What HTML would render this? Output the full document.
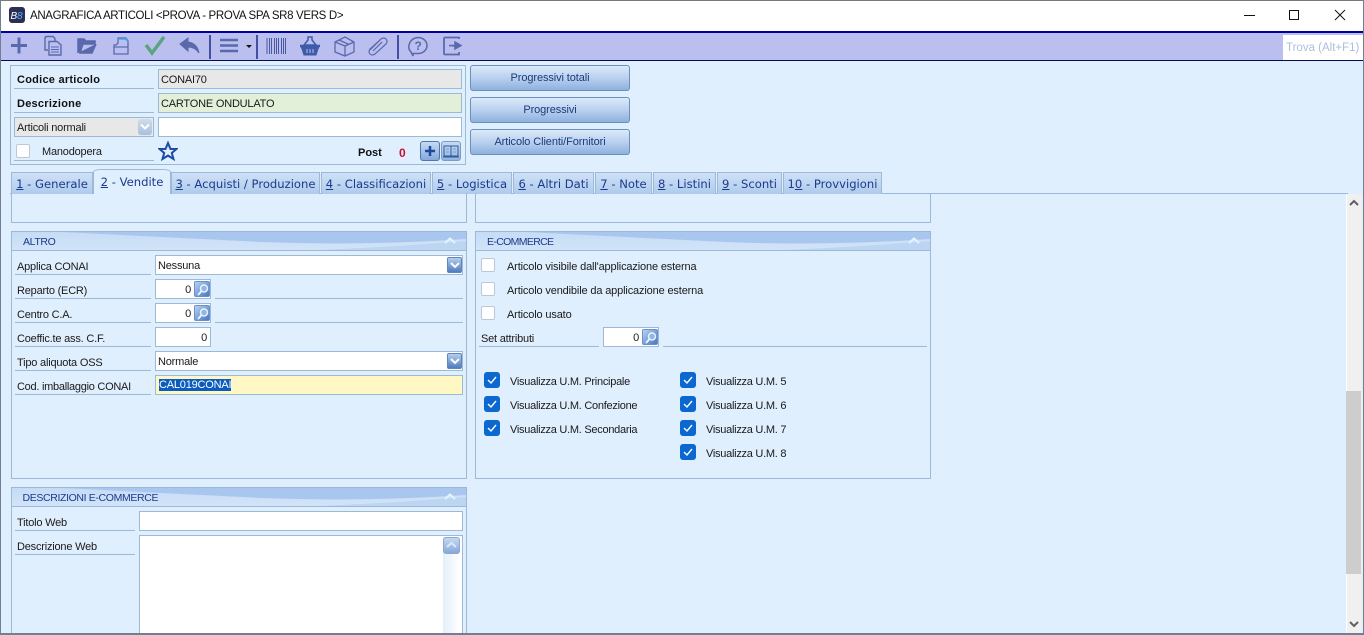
<!DOCTYPE html>
<html lang="it">
<head>
<meta charset="utf-8">
<title>Anagrafica Articoli</title>
<style>
html,body{margin:0;padding:0;width:1364px;height:635px;overflow:hidden;background:#e0effe}
body{position:relative;font-family:"Liberation Sans",sans-serif;font-size:11px;color:#1a1a1a}
.a,.t,.i,.l,.p,.h,.b,.tab,.cb,.cc,.s,.dd{position:absolute;box-sizing:border-box}
.t{white-space:nowrap;line-height:14px;height:14px;letter-spacing:-.2px}
.i{background:#fff;border:1px solid #9cbad8;line-height:21px;padding-left:2px;white-space:nowrap;font-size:11px;letter-spacing:-.2px}
.l{height:1px;background:#9cbad8}
.p{border:1px solid #9cbad8}
.h{height:19px;border-bottom:1px solid #9cbad8;overflow:hidden;color:#1c3a8c;line-height:21px;padding-left:11px;font-size:10.5px;letter-spacing:-.36px}
.h svg{position:absolute;left:0;top:0}
.h span{position:relative}
.b{left:470px;width:160px;height:26px;border:1px solid #6a90bd;border-radius:3px;background:linear-gradient(#dce9f9,#b9d0ef 50%,#8fb0de);text-align:center;line-height:25px;color:#1c3a7c;letter-spacing:-.1px}
.tab{top:172px;height:22px;background:linear-gradient(#cfe1f7,#aecbec);border:1px solid #9cbad8;border-bottom:0;color:#1c3a8c;font-family:"DejaVu Sans",sans-serif;font-size:11.6px;line-height:22px;text-align:center;white-space:nowrap}
.tab u{text-underline-offset:1px}
.cb{width:14px;height:14px;background:#fff;border:1px solid #bcc8d4;border-radius:2px}
.cc{width:16px;height:16px;background:#0a68d0;border-radius:3px}
.cc svg{position:absolute;left:0;top:0}
.s{width:16px;height:16px;border:1px solid #6a90c4;border-radius:2px;background:linear-gradient(135deg,#bcd4f2,#6f9ad8 60%,#4a78c0)}
.s svg{position:absolute;left:1px;top:1px}
.dd{width:15px;height:16px;border-radius:2px;border:1px solid #5f86bb;background:linear-gradient(#b4ccee,#4f7cbe)}
.dd svg{position:absolute;left:1px;top:2px}
.v{letter-spacing:-.27px}
.w{letter-spacing:-.15px}
.bd{font-weight:bold;color:#111;letter-spacing:.25px}
</style>
</head>
<body>
<!-- window frame -->
<div class="a" style="left:0;top:0;width:1364px;height:31px;background:#fff;border-top:1px solid #7a7a7a"></div>
<svg class="a" style="left:9px;top:7px" width="16" height="16"><rect width="16" height="16" rx="3" fill="#2b2f55"/><text x="1.5" y="12" font-family="Liberation Sans" font-size="10" font-style="italic" fill="#fff">B</text><text x="8" y="12" font-family="Liberation Sans" font-size="10" font-style="italic" fill="#5db3f0">8</text></svg>
<div class="t" style="left:30px;top:8px;font-size:11.5px;color:#111;letter-spacing:-.34px;line-height:16px;height:16px">ANAGRAFICA ARTICOLI &lt;PROVA - PROVA SPA SR8 VERS D&gt;</div>
<svg class="a" style="left:1240px;top:6px" width="124" height="20" fill="none" stroke="#111"><path d="M4 9.5H15"/><rect x="49.5" y="4.5" width="9" height="9"/><path d="M95 4L105 14M105 4L95 14"/></svg>

<!-- toolbar -->
<div class="a" style="left:0;top:31px;width:1364px;height:2px;background:#00009c"></div>
<div class="a" style="left:0;top:33px;width:1364px;height:27px;background:#bbbff0"></div>
<div class="a" style="left:0;top:60px;width:1364px;height:1px;background:#0a0a50"></div>
<svg class="a" style="left:0;top:33px" width="480" height="27" fill="none" stroke="#5a69ab">
 <path d="M11 12.500H27M19 4.500V20.500" stroke-width="3"/>
 <path d="M48 17H45V5Q45 3.500 47 3.500H53L55 5.500V8M49 8.500H57L61 12V22H49Z" stroke-width="1.400"/><path d="M51 14H59M51 16.500H59M51 19H59" stroke-width="1"/>
 <path d="M78 20V6H84L86 8H95V11H83L80 20H92L96 11" fill="#5a69ab" stroke-width="1.500"/>
 <path d="M114 21V12H116L118 10V5H126L128 8V12V21Z" stroke="#5a69ab" stroke-width="1.300"/><path d="M117 6H126L128 9" stroke="#4ea2e0" stroke-width="1.500"/><path d="M114 14H128" stroke-width="1.200"/>
 <path d="M146 12L152 20L164 4" stroke="#57a581" stroke-width="3.500"/>
 <path d="M180 11L188 5V9Q197 10 199 20Q195 14 188 14V18Z" fill="#5a69ab" stroke-width="1"/>
 <path d="M210 2V26M257 2V26M398 2V26" stroke="#1c2a8a" stroke-width="1.500"/>
 <path d="M220 7H238M220 12.500H238M220 18H238" stroke-width="2.500"/>
 <path d="M246 12H252L249 15Z" fill="#111" stroke="none"/>
 <path d="M267 5V21M269.500 5V21M271.500 5V21M274.500 5V21M276.500 5V21M278.500 5V21M281.500 5V21M283.500 5V21M285.500 5V21" stroke="#4a58a0" stroke-width="1"/>
 <path d="M301 13H319L316 22H304Z" fill="#3f5aa8" stroke="#3f5aa8"/><path d="M300 13H320" stroke="#3f5aa8" stroke-width="2.500"/><path d="M308 4H312V7L316 12H304L308 7Z" fill="#bbbff0" stroke="#3f5aa8" stroke-width="1.500"/><path d="M307 16V20M310 16V20M313 16V20" stroke="#bbbff0"/>
 <path d="M335 9L345 4L354 9V19L345 23L335 19ZM335 9L345 13L354 9M345 13V23M339 7L349 11.500" stroke-width="1.300"/>
 <path d="M370 17L381 6Q384 4 386 6Q388 8 386 11L375 21Q372 23 370 21Q368 19 370 16L380 7M373 18L382 9" stroke-width="1.200"/>
 <path d="M418 4.500A9 8 0 1 1 418 20.500H413V23L411 19Q408 16 409 12Q411 5 418 4.500Z" stroke-width="1.500"/>
 <text x="414.500" y="17" font-family="Liberation Sans" font-size="12" font-weight="bold" fill="#5a69ab" stroke="none">?</text>
 <path d="M459 6V4.500H445Q444 4.500 444 6V20Q444 21.500 445 21.500H459V19" stroke-width="1.800"/><path d="M449 12.500H455V9L461 12.500L455 16V13Z" fill="#5a69ab" stroke-width="1.500"/>
</svg>
<div class="a" style="left:1283px;top:35px;width:80px;height:25px;background:#fff"></div>
<div class="t" style="left:1286px;top:41px;color:#a9c0dc;font-size:11.5px;letter-spacing:0">Trova (Alt+F1)</div>

<!-- header panel -->
<div class="p" style="left:10px;top:65px;width:456px;height:100px"></div>
<div class="t bd" style="left:17px;top:73px">Codice articolo</div>
<div class="l" style="left:14px;top:88px;width:140px"></div>
<div class="i" style="left:158px;top:69px;width:304px;height:20px;background:#e8e8e8">CONAI70</div>
<div class="t bd" style="left:17px;top:97px">Descrizione</div>
<div class="l" style="left:14px;top:112px;width:140px"></div>
<div class="i" style="left:158px;top:93px;width:304px;height:20px;background:#e2f0da">CARTONE ONDULATO</div>
<div class="i" style="left:14px;top:117px;width:140px;height:20px;background:#e8e8e8">Articoli normali</div>
<div class="a" style="left:138px;top:119px;width:14px;height:16px;border-radius:3px;background:linear-gradient(#cfdcec,#a8c0dc)"></div>
<svg class="a" style="left:139px;top:123px" width="12" height="8" fill="none" stroke="#fff" stroke-width="2"><path d="M2 1.500L6 5.500L10 1.500"/></svg>
<div class="i" style="left:158px;top:117px;width:304px;height:20px"></div>
<div class="cb" style="left:16px;top:144px"></div>
<div class="t" style="left:42px;top:145px">Manodopera</div>
<div class="l" style="left:14px;top:160px;width:140px"></div>
<svg class="a" style="left:158px;top:141px" width="20" height="20" fill="none" stroke="#1e4c9e" stroke-width="2"><path d="M10 2L12.500 8H18.500L13.800 12L15.500 18L10 14.600L4.500 18L6.200 12L1.500 8H7.500Z"/></svg>
<div class="t" style="left:358px;top:146px;font-weight:bold;color:#111;letter-spacing:0">Post</div>
<div class="t" style="left:399px;top:146px;font-weight:bold;color:#c8102e;font-size:12px">0</div>
<div class="a" style="left:420px;top:141px;width:20px;height:20px;border:1px solid #4f76ad;border-radius:3px;background:linear-gradient(#c6daf3,#86a9dc)"></div>
<svg class="a" style="left:420px;top:141px" width="20" height="20" stroke="#1c4a9c" stroke-width="2.500"><path d="M5 10H15M10 5V15"/></svg>
<div class="a" style="left:441px;top:141px;width:20px;height:20px;border:1px solid #7d9cc4;border-radius:3px;background:linear-gradient(#c6daf3,#93b4e0)"></div>
<svg class="a" style="left:441px;top:141px" width="20" height="20" fill="none" stroke="#2f5a9c"><path d="M3 5H10V15H3ZM10 5H17V15H10ZM2 16H18"/><path d="M5 8H8M12 8H15M5 11H8M12 11H15" stroke="#7a9cc8"/></svg>

<div class="b" style="top:65px">Progressivi totali</div>
<div class="b" style="top:97px">Progressivi</div>
<div class="b" style="top:129px">Articolo Clienti/Fornitori</div>

<!-- tab strip -->
<div class="l" style="left:10px;top:193px;width:1338px"></div>
<div class="tab" style="left:11px;width:82px"><u>1</u> - Generale</div>
<div class="tab" style="left:93px;top:169px;width:78px;height:25px;background:#e0effe;border-radius:8px 8px 0 0/3px 3px 0 0;line-height:24px;color:#1c3a8c;border-bottom:0"><u>2</u> - Vendite</div>
<div class="tab" style="left:171px;width:149px"><u>3</u> - Acquisti / Produzione</div>
<div class="tab" style="left:321px;width:110px"><u>4</u> - Classificazioni</div>
<div class="tab" style="left:432px;width:80px"><u>5</u> - Logistica</div>
<div class="tab" style="left:513px;width:81px"><u>6</u> - Altri Dati</div>
<div class="tab" style="left:595px;width:57px"><u>7</u> - Note</div>
<div class="tab" style="left:653px;width:63px"><u>8</u> - Listini</div>
<div class="tab" style="left:717px;width:65px"><u>9</u> - Sconti</div>
<div class="tab" style="left:783px;width:99px">1<u>0</u> - Provvigioni</div>

<!-- scrollbar -->
<div class="a" style="left:1346px;top:194px;width:16px;height:439px;background:#f0f0f0;border-left:1px solid #fff"></div>
<div class="a" style="left:1346px;top:391px;width:15px;height:183px;background:#cdcdcd"></div>
<svg class="a" style="left:1346px;top:197px" width="16" height="12" fill="none" stroke="#606060" stroke-width="2"><path d="M4 8L8 4L12 8"/></svg>
<svg class="a" style="left:1346px;top:618px" width="16" height="12" fill="none" stroke="#606060" stroke-width="2"><path d="M4 4L8 8L12 4"/></svg>

<!-- upper remnants -->
<div class="p" style="left:11px;top:193px;width:456px;height:30px;border-top:0"></div>
<div class="p" style="left:475px;top:193px;width:456px;height:30px;border-top:0"></div>

<!-- ALTRO -->
<div class="p" style="left:11px;top:231px;width:456px;height:248px"></div>
<div class="h" style="left:12px;top:232px;width:454px">
 <svg width="454" height="19"><defs><linearGradient id="g1" x1="0" y1="0" x2="0" y2="1"><stop offset="0" stop-color="#c6dcf6"/><stop offset="1" stop-color="#d2e4f8"/></linearGradient></defs><rect width="454" height="19" fill="url(#g1)"/><path d="M50 0H454V7Q350 14 250 10Q150 5 50 0Z" fill="#a9c7ee"/><path d="M280 19Q370 16 454 9V19Z" fill="#bcd5f2"/></svg>
 <span>ALTRO</span>
</div>
<svg class="a" style="left:443px;top:236px" width="14" height="9" fill="none" stroke="#e8f2fd" stroke-width="2"><path d="M2 7L7 2.500L12 7"/></svg>

<div class="t" style="left:17px;top:260px">Applica CONAI</div><div class="l" style="left:15px;top:274px;width:136px"></div>
<div class="i" style="left:155px;top:255px;width:308px;height:20px">Nessuna</div>
<div class="dd" style="left:447px;top:257px"><svg width="12" height="11" fill="none" stroke="#fff" stroke-width="2"><path d="M2 3L6 7L10 3"/></svg></div>

<div class="t" style="left:17px;top:284px">Reparto (ECR)</div><div class="l" style="left:15px;top:298px;width:136px"></div>
<div class="i" style="left:155px;top:279px;width:56px;height:20px;text-align:right;padding-right:19px">0</div>
<div class="s" style="left:194px;top:281px"><svg width="14" height="14" fill="#8fb4e6" stroke="#eaf3fd" stroke-width="1.500"><circle cx="8" cy="5.500" r="3.500"/><path d="M5.500 8L2 12" stroke-width="2"/></svg></div>
<div class="l" style="left:215px;top:298px;width:248px"></div>

<div class="t" style="left:17px;top:308px">Centro C.A.</div><div class="l" style="left:15px;top:322px;width:136px"></div>
<div class="i" style="left:155px;top:303px;width:56px;height:20px;text-align:right;padding-right:19px">0</div>
<div class="s" style="left:194px;top:305px"><svg width="14" height="14" fill="#8fb4e6" stroke="#eaf3fd" stroke-width="1.500"><circle cx="8" cy="5.500" r="3.500"/><path d="M5.500 8L2 12" stroke-width="2"/></svg></div>
<div class="l" style="left:215px;top:322px;width:248px"></div>

<div class="t" style="left:17px;top:332px">Coeffic.te ass. C.F.</div><div class="l" style="left:15px;top:346px;width:136px"></div>
<div class="i" style="left:155px;top:327px;width:56px;height:20px;text-align:right;padding-right:3px">0</div>

<div class="t" style="left:17px;top:356px">Tipo aliquota OSS</div><div class="l" style="left:15px;top:370px;width:136px"></div>
<div class="i" style="left:155px;top:351px;width:308px;height:20px">Normale</div>
<div class="dd" style="left:447px;top:353px"><svg width="12" height="11" fill="none" stroke="#fff" stroke-width="2"><path d="M2 3L6 7L10 3"/></svg></div>

<div class="t v" style="left:17px;top:380px">Cod. imballaggio CONAI</div><div class="l" style="left:15px;top:394px;width:136px"></div>
<div class="i" style="left:155px;top:375px;width:308px;height:20px;background:#fff8c4;padding-left:3px"><span style="background:#0a5cc0;color:#fff;display:inline-block;height:12px;line-height:12px;vertical-align:top;margin-top:3px">CAL019CONAI</span></div>

<!-- E-COMMERCE -->
<div class="p" style="left:475px;top:231px;width:456px;height:248px"></div>
<div class="h" style="left:476px;top:232px;width:454px;letter-spacing:-.65px">
 <svg width="454" height="19"><rect width="454" height="19" fill="url(#g1)"/><path d="M50 0H454V7Q350 14 250 10Q150 5 50 0Z" fill="#a9c7ee"/><path d="M280 19Q370 16 454 9V19Z" fill="#bcd5f2"/></svg>
 <span>E-COMMERCE</span>
</div>
<svg class="a" style="left:907px;top:236px" width="14" height="9" fill="none" stroke="#e8f2fd" stroke-width="2"><path d="M2 7L7 2.500L12 7"/></svg>

<div class="cb" style="left:481px;top:258px"></div><div class="t w" style="left:507px;top:260px">Articolo visibile dall'applicazione esterna</div>
<div class="cb" style="left:481px;top:282px"></div><div class="t w" style="left:507px;top:284px">Articolo vendibile da applicazione esterna</div>
<div class="cb" style="left:481px;top:306px"></div><div class="t w" style="left:507px;top:308px">Articolo usato</div>
<div class="t" style="left:481px;top:332px">Set attributi</div><div class="l" style="left:479px;top:346px;width:120px"></div>
<div class="i" style="left:603px;top:327px;width:56px;height:20px;text-align:right;padding-right:19px">0</div>
<div class="s" style="left:642px;top:329px"><svg width="14" height="14" fill="#8fb4e6" stroke="#eaf3fd" stroke-width="1.500"><circle cx="8" cy="5.500" r="3.500"/><path d="M5.500 8L2 12" stroke-width="2"/></svg></div>
<div class="l" style="left:663px;top:346px;width:264px"></div>

<div class="cc" style="left:484px;top:372px"><svg width="16" height="16" fill="none" stroke="#fff" stroke-width="1.400"><path d="M4 8L7 11L12 5"/></svg></div><div class="t v" style="left:510px;top:375px">Visualizza U.M. Principale</div>
<div class="cc" style="left:484px;top:396px"><svg width="16" height="16" fill="none" stroke="#fff" stroke-width="1.400"><path d="M4 8L7 11L12 5"/></svg></div><div class="t v" style="left:510px;top:399px">Visualizza U.M. Confezione</div>
<div class="cc" style="left:484px;top:420px"><svg width="16" height="16" fill="none" stroke="#fff" stroke-width="1.400"><path d="M4 8L7 11L12 5"/></svg></div><div class="t v" style="left:510px;top:423px">Visualizza U.M. Secondaria</div>
<div class="cc" style="left:680px;top:372px"><svg width="16" height="16" fill="none" stroke="#fff" stroke-width="1.400"><path d="M4 8L7 11L12 5"/></svg></div><div class="t v" style="left:706px;top:375px">Visualizza U.M. 5</div>
<div class="cc" style="left:680px;top:396px"><svg width="16" height="16" fill="none" stroke="#fff" stroke-width="1.400"><path d="M4 8L7 11L12 5"/></svg></div><div class="t v" style="left:706px;top:399px">Visualizza U.M. 6</div>
<div class="cc" style="left:680px;top:420px"><svg width="16" height="16" fill="none" stroke="#fff" stroke-width="1.400"><path d="M4 8L7 11L12 5"/></svg></div><div class="t v" style="left:706px;top:423px">Visualizza U.M. 7</div>
<div class="cc" style="left:680px;top:444px"><svg width="16" height="16" fill="none" stroke="#fff" stroke-width="1.400"><path d="M4 8L7 11L12 5"/></svg></div><div class="t v" style="left:706px;top:447px">Visualizza U.M. 8</div>

<!-- DESCRIZIONI -->
<div class="p" style="left:11px;top:487px;width:456px;height:148px"></div>
<div class="h" style="left:12px;top:488px;width:454px;padding-left:10.5px">
 <svg width="454" height="19"><rect width="454" height="19" fill="url(#g1)"/><path d="M50 0H454V7Q350 14 250 10Q150 5 50 0Z" fill="#a9c7ee"/><path d="M280 19Q370 16 454 9V19Z" fill="#bcd5f2"/></svg>
 <span>DESCRIZIONI E-COMMERCE</span>
</div>
<svg class="a" style="left:443px;top:492px" width="14" height="9" fill="none" stroke="#e8f2fd" stroke-width="2"><path d="M2 7L7 2.500L12 7"/></svg>
<div class="t" style="left:17px;top:516px">Titolo Web</div><div class="l" style="left:15px;top:530px;width:120px"></div>
<div class="i" style="left:139px;top:511px;width:324px;height:20px"></div>
<div class="t" style="left:17px;top:540px">Descrizione Web</div><div class="l" style="left:15px;top:554px;width:120px"></div>
<div class="i" style="left:139px;top:535px;width:324px;height:100px"></div>
<div class="a" style="left:443px;top:537px;width:17px;height:96px;background:linear-gradient(90deg,#e4effb,#fff)"></div>
<div class="a" style="left:443px;top:537px;width:17px;height:17px;border-radius:3px;border:1px solid #8aa8d0;background:linear-gradient(#c4d8f2,#88a8d8)"></div>
<svg class="a" style="left:444px;top:540px" width="15" height="10" fill="none" stroke="#dbe8f8" stroke-width="2"><path d="M3 7L7.500 3L12 7"/></svg>

<!-- outer window borders -->
<div class="a" style="left:0;top:0;width:1px;height:635px;background:#6f7f94"></div>
<div class="a" style="left:1363px;top:0;width:1px;height:635px;background:#6f7f94"></div>
<div class="a" style="left:0;top:633px;width:1364px;height:2px;background:#6f7f94"></div>
</body>
</html>
